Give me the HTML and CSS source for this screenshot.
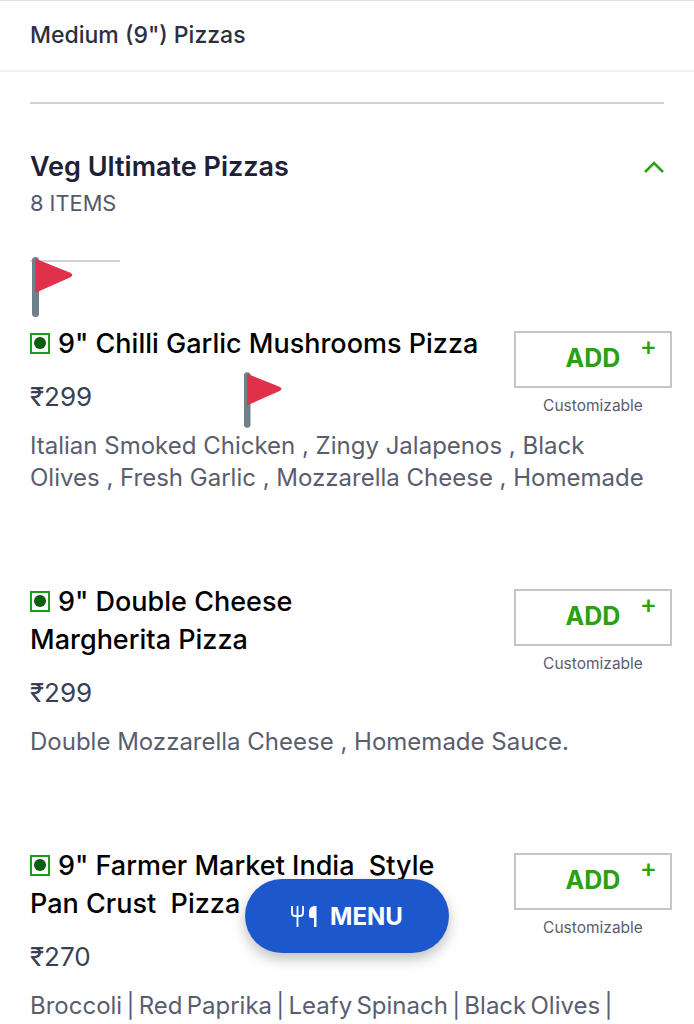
FILE: index.html
```html
<!DOCTYPE html>
<html lang="en">

<head>
  <meta charset="utf-8">
  <title>Menu</title>
  <link rel="stylesheet" href="styles.css">
  <meta name="viewport" content="width=device-width, initial-scale=1.0">
</head>

<body>
  <div class="page">
    <div class="subcat">Medium (9") Pizzas</div>
    <div class="rule"></div>

    <div class="section">
      <div>
        <h2>Veg Ultimate Pizzas</h2>
        <p class="count">8 ITEMS</p>
      </div>
      <svg class="chevron" width="22" height="13" viewBox="0 0 22 13">
        <path d="M2 12 L11 3 L20 12" fill="none" stroke="#2aa012" stroke-width="2.6" />
      </svg>
    </div>

    <div class="short-rule"></div>

    <div class="item">
      <div class="info">
        <h3><span class="veg"><i></i></span>9" Chilli Garlic Mushrooms Pizza</h3>
        <p class="price">₹299</p>
        <p class="desc">Italian Smoked Chicken , Zingy Jalapenos , Black Olives , Fresh Garlic , Mozzarella Cheese , Homemade</p>
      </div>
      <div class="action">
        <button class="add">ADD<span class="plus">+</span></button>
        <span class="note">Customizable</span>
      </div>
    </div>

    <div class="item">
      <div class="info">
        <h3 class="narrow"><span class="veg"><i></i></span>9" Double Cheese Margherita Pizza</h3>
        <p class="price">₹299</p>
        <p class="desc">Double Mozzarella Cheese , Homemade Sauce.</p>
      </div>
      <div class="action">
        <button class="add">ADD<span class="plus">+</span></button>
        <span class="note">Customizable</span>
      </div>
    </div>

    <div class="item">
      <div class="info">
        <h3 class="pre"><span class="veg"><i></i></span>9" Farmer Market India  Style
Pan Crust  Pizza</h3>
        <p class="price">₹270</p>
        <p class="desc tight">Broccoli | Red Paprika | Leafy Spinach | Black Olives |</p>
      </div>
      <div class="action">
        <button class="add">ADD<span class="plus">+</span></button>
        <span class="note">Customizable</span>
      </div>
    </div>

    <svg class="flag flag-one" viewBox="0 0 41 60">
      <path d="M3.500 3.500 V56.500" stroke="#6f808d" stroke-width="7" stroke-linecap="round" />
      <path d="M4 2.500 L39 16.500 Q41 18 39 19.500 L4 35 Z" fill="#e0304a" stroke="#e0304a" stroke-width="1" stroke-linejoin="round" />
    </svg>
    <svg class="flag flag-two" viewBox="0 0 41 60">
      <path d="M3.500 3.500 V56.500" stroke="#6f808d" stroke-width="7" stroke-linecap="round" />
      <path d="M4 2.500 L39 16.500 Q41 18 39 19.500 L4 35 Z" fill="#e0304a" stroke="#e0304a" stroke-width="1" stroke-linejoin="round" />
    </svg>

    <button class="menu-btn">
      <svg width="26" height="21" viewBox="0 0 26 21">
        <path d="M1 0 V7 Q1 10 4 10 H9 Q12 10 12 7 V0 M6.500 0 V21" fill="none" stroke="#fff" stroke-width="1.800" />
        <path d="M18 6 Q18 1 23 0 H25.500 V21 H23 V12 H20 Q18 12 18 10 Z" fill="#fff" />
      </svg>
      MENU
    </button>
  </div>
</body>

</html>
```

FILE: styles.css
```css
* {
  margin: 0;
  padding: 0;
  box-sizing: border-box;
  font-family: 'Inter', 'Open Sans', sans-serif;
}

html,
body {
  height: 1024px;
  overflow: hidden;
  background: #fff;
}

.page {
  position: relative;
  height: 1024px;
  overflow: hidden;
}

.subcat {
  height: 72px;
  padding: 15px 30px 0;
  border-top: 1px solid #dedfe2;
  border-bottom: 2px solid #f1f1f3;
  font-size: 23px;
  font-weight: 500;
  line-height: 38px;
  color: #2b2f42;
}

.rule {
  height: 2px;
  margin: 30px 30px 0 30px;
  background: #cfd0dc;
}

.section {
  display: flex;
  justify-content: space-between;
  padding: 44px 29px 0 30px;
}

.section h2 {
  font-size: 27px;
  line-height: 38px;
  font-weight: 600;
  color: #1d2036;
}

.count {
  font-size: 21.800px;
  line-height: 34px;
  color: #555868;
}

.chevron {
  margin-top: 12px;
}

.short-rule {
  width: 90px;
  height: 2px;
  margin: 40px 0 0 30px;
  background: #cfd0dc;
}

.item {
  display: flex;
  justify-content: space-between;
  padding: 63px 22px 0 30px;
  margin-bottom: 26px;
}

.info {
  width: 470px;
  flex-shrink: 0;
}

.info h3 {
  font-size: 27px;
  line-height: 38px;
  font-weight: 500;
  color: #000;
}

.info h3.narrow {
  width: 300px;
}

.info h3.pre {
  white-space: pre;
}

.veg {
  display: inline-flex;
  align-items: center;
  justify-content: center;
  width: 20px;
  height: 21px;
  margin-right: 8px;
  border: 2px solid #1c9a1c;
  vertical-align: 4px;
}

.veg i {
  width: 12px;
  height: 12px;
  border-radius: 50%;
  background: #075e0c;
}

.price {
  margin-top: 15px;
  font-size: 26px;
  line-height: 38px;
  color: #3c3f52;
}

.desc {
  margin-top: 14px;
  width: 616px;
  font-size: 24px;
  line-height: 32px;
  color: #5a5d6e;
}

.desc.tight {
  word-spacing: -2.500px;
}

.action {
  display: flex;
  flex-direction: column;
  align-items: center;
  width: 158px;
  margin-top: 6px;
}

.add {
  position: relative;
  width: 158px;
  height: 57px;
  padding-bottom: 3px;
  background: #fff;
  border: 2px solid #c3c4cc;
  font-size: 25px;
  font-weight: 700;
  color: #2aa012;
}

.plus {
  position: absolute;
  top: 1px;
  right: 13px;
  font-size: 26px;
  line-height: 24px;
  font-weight: 500;
}

.note {
  margin-top: 8px;
  font-size: 15.500px;
  line-height: 20px;
  color: #5a5d6e;
}

.flag {
  position: absolute;
}

.flag-one {
  left: 32px;
  top: 257px;
  width: 41px;
  height: 60px;
}

.flag-two {
  left: 244px;
  top: 372px;
  width: 38px;
  height: 56px;
}

.menu-btn {
  position: absolute;
  left: 245px;
  top: 879px;
  display: flex;
  align-items: center;
  justify-content: center;
  gap: 13px;
  width: 204px;
  height: 74px;
  border: none;
  border-radius: 37px;
  background: #1c58cc;
  box-shadow: 0 6px 14px rgba(0, 0, 0, 0.25);
  font-size: 24px;
  font-weight: 700;
  color: #fff;
}
```
